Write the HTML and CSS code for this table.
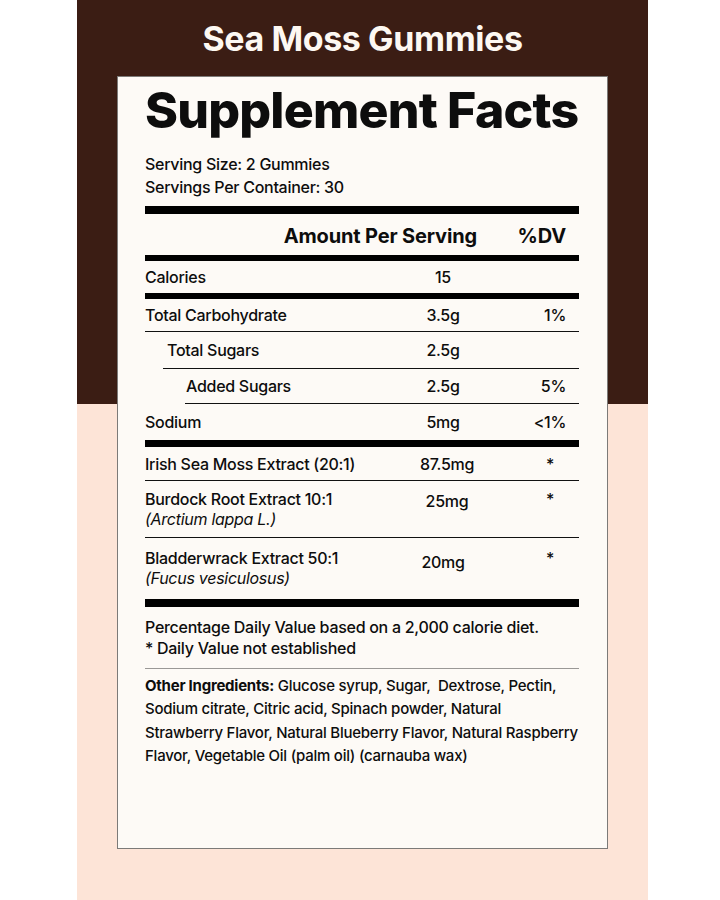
FILE: index.html
```html
<!DOCTYPE html>
<html lang="en">
<head>
<meta charset="utf-8">
<title>Sea Moss Gummies – Supplement Facts</title>
<link rel="stylesheet" href="styles.css">
</head>
<body>
<div class="panel">
  <div class="brand">Sea Moss Gummies</div>
  <div class="card">
    <h1 class="title">Supplement Facts</h1>
    <div class="serving">
      <div>Serving Size: 2 Gummies</div>
      <div>Servings Per Container: 30</div>
    </div>
    <div class="rule rule-8"></div>
    <div class="row head">
      <span class="lbl"></span>
      <span class="amt head-amt">Amount Per Serving</span>
      <span class="dv">%DV</span>
    </div>
    <div class="rule rule-6"></div>
    <div class="row r32">
      <span class="lbl">Calories</span>
      <span class="amt">15</span>
      <span class="dv"></span>
    </div>
    <div class="rule rule-6"></div>
    <div class="row r32 line">
      <span class="lbl">Total Carbohydrate</span>
      <span class="amt">3.5g</span>
      <span class="dv">1%</span>
    </div>
    <div class="row r36 line ind1">
      <span class="lbl">Total Sugars</span>
      <span class="amt">2.5g</span>
      <span class="dv"></span>
    </div>
    <div class="row r34 line ind2">
      <span class="lbl">Added Sugars</span>
      <span class="amt">2.5g</span>
      <span class="dv">5%</span>
    </div>
    <div class="row r36">
      <span class="lbl">Sodium</span>
      <span class="amt">5mg</span>
      <span class="dv">&lt;1%</span>
    </div>
    <div class="rule rule-7"></div>
    <div class="row r33 line">
      <span class="lbl">Irish Sea Moss Extract (20:1)</span>
      <span class="amt nudge">87.5mg</span>
      <span class="dv star">*</span>
    </div>
    <div class="row two line b1">
      <span class="lbl">Burdock Root Extract 10:1<br><em>(Arctium lappa L.)</em></span>
      <span class="amt top nudge">25mg</span>
      <span class="dv star">*</span>
    </div>
    <div class="row two b2">
      <span class="lbl">Bladderwrack Extract 50:1<br><em>(Fucus vesiculosus)</em></span>
      <span class="amt top2">20mg</span>
      <span class="dv star">*</span>
    </div>
    <div class="rule rule-8"></div>
    <div class="foot">
      <div>Percentage Daily Value based on a 2,000 calorie diet.</div>
      <div>* Daily Value not established</div>
    </div>
    <div class="other">
      <strong>Other Ingredients:</strong> Glucose syrup, Sugar,&nbsp; Dextrose, Pectin,<br>
      Sodium citrate, Citric acid, Spinach powder, Natural<br>
      Strawberry Flavor, Natural Blueberry Flavor, Natural Raspberry<br>
      Flavor, Vegetable Oil (palm oil) (carnauba wax)
    </div>
  </div>
</div>
</body>
</html>
```

FILE: styles.css
```css
* { box-sizing: border-box; }

html, body {
  margin: 0;
  padding: 0;
  background: #ffffff;
}

body {
  font-family: Inter, "Noto Sans", "DejaVu Sans", sans-serif;
  color: #0d0d0d;
}

.panel {
  width: 571px;
  height: 900px;
  margin-left: 77px;
  background: linear-gradient(to bottom, #3b1d14 0, #3b1d14 404px, #fde4d7 404px, #fde4d7 100%);
}

.brand {
  height: 76px;
  padding-top: 2px;
  line-height: 74px;
  text-align: center;
  color: #fdf8f2;
  font-size: 34px;
  font-weight: 700;
  letter-spacing: -0.4px;
}

.card {
  margin: 0 40px;
  height: 773px;
  background: #fdfaf6;
  border: 1px solid #7c7a78;
  padding: 8px 28px 0 27px;
  font-weight: 500;
  letter-spacing: -0.28px;
}

.title {
  margin: 0;
  font-size: 50px;
  line-height: 50px;
  font-weight: 800;
  letter-spacing: -0.8px;
  white-space: nowrap;
}

.serving {
  margin-top: 18px;
  font-size: 16px;
  line-height: 23px;
}

.serving + .rule { margin-top: 7px; }

.rule { background: #000; }
.rule-8 { height: 8px; }
.rule-7 { height: 7px; }
.rule-6 { height: 6px; }

.row {
  display: grid;
  grid-template-columns: 1fr 68px 60px;
  column-gap: 29px;
  padding-right: 13px;
  font-size: 16px;
  line-height: 20px;
  align-items: center;
}

.row.line { border-bottom: 1px solid #111; }

.r32 { padding-top: 6px; padding-bottom: 6px; }
.r33 { padding-top: 7px; padding-bottom: 6px; }
.r34 { padding-top: 7px; padding-bottom: 7px; }
.r36 { padding-top: 8px; padding-bottom: 8px; }

.ind1 { margin-left: 18px; }
.ind1 .lbl { padding-left: 4px; }
.ind2 { margin-left: 40px; }
.ind2 .lbl { padding-left: 1px; }

.head {
  padding-top: 10px;
  padding-bottom: 7px;
  font-size: 20px;
  line-height: 24px;
  font-weight: 700;
  letter-spacing: -0.15px;
}

.head-amt {
  justify-self: end;
  white-space: nowrap;
  text-align: right;
}

.lbl { white-space: nowrap; }

.amt { text-align: center; white-space: nowrap; }
.amt.nudge { padding-left: 8px; }

.dv { text-align: right; white-space: nowrap; }
.dv.star { padding-right: 12px; }

.two { align-items: start; }
.b1 { padding-top: 8px; padding-bottom: 8px; }
.b2 { padding-top: 10px; padding-bottom: 11px; }
.amt.top { padding-top: 2px; }
.amt.top2 { padding-top: 4px; }

em { font-style: italic; font-weight: 400; }

.foot {
  padding: 10px 0 9px;
  font-size: 16px;
  line-height: 21px;
  border-bottom: 1px solid #9a9896;
}

.other {
  padding-top: 5px;
  font-size: 15px;
  line-height: 23.3px;
  letter-spacing: -0.24px;
  white-space: nowrap;
}

.other strong { font-weight: 700; }
```
